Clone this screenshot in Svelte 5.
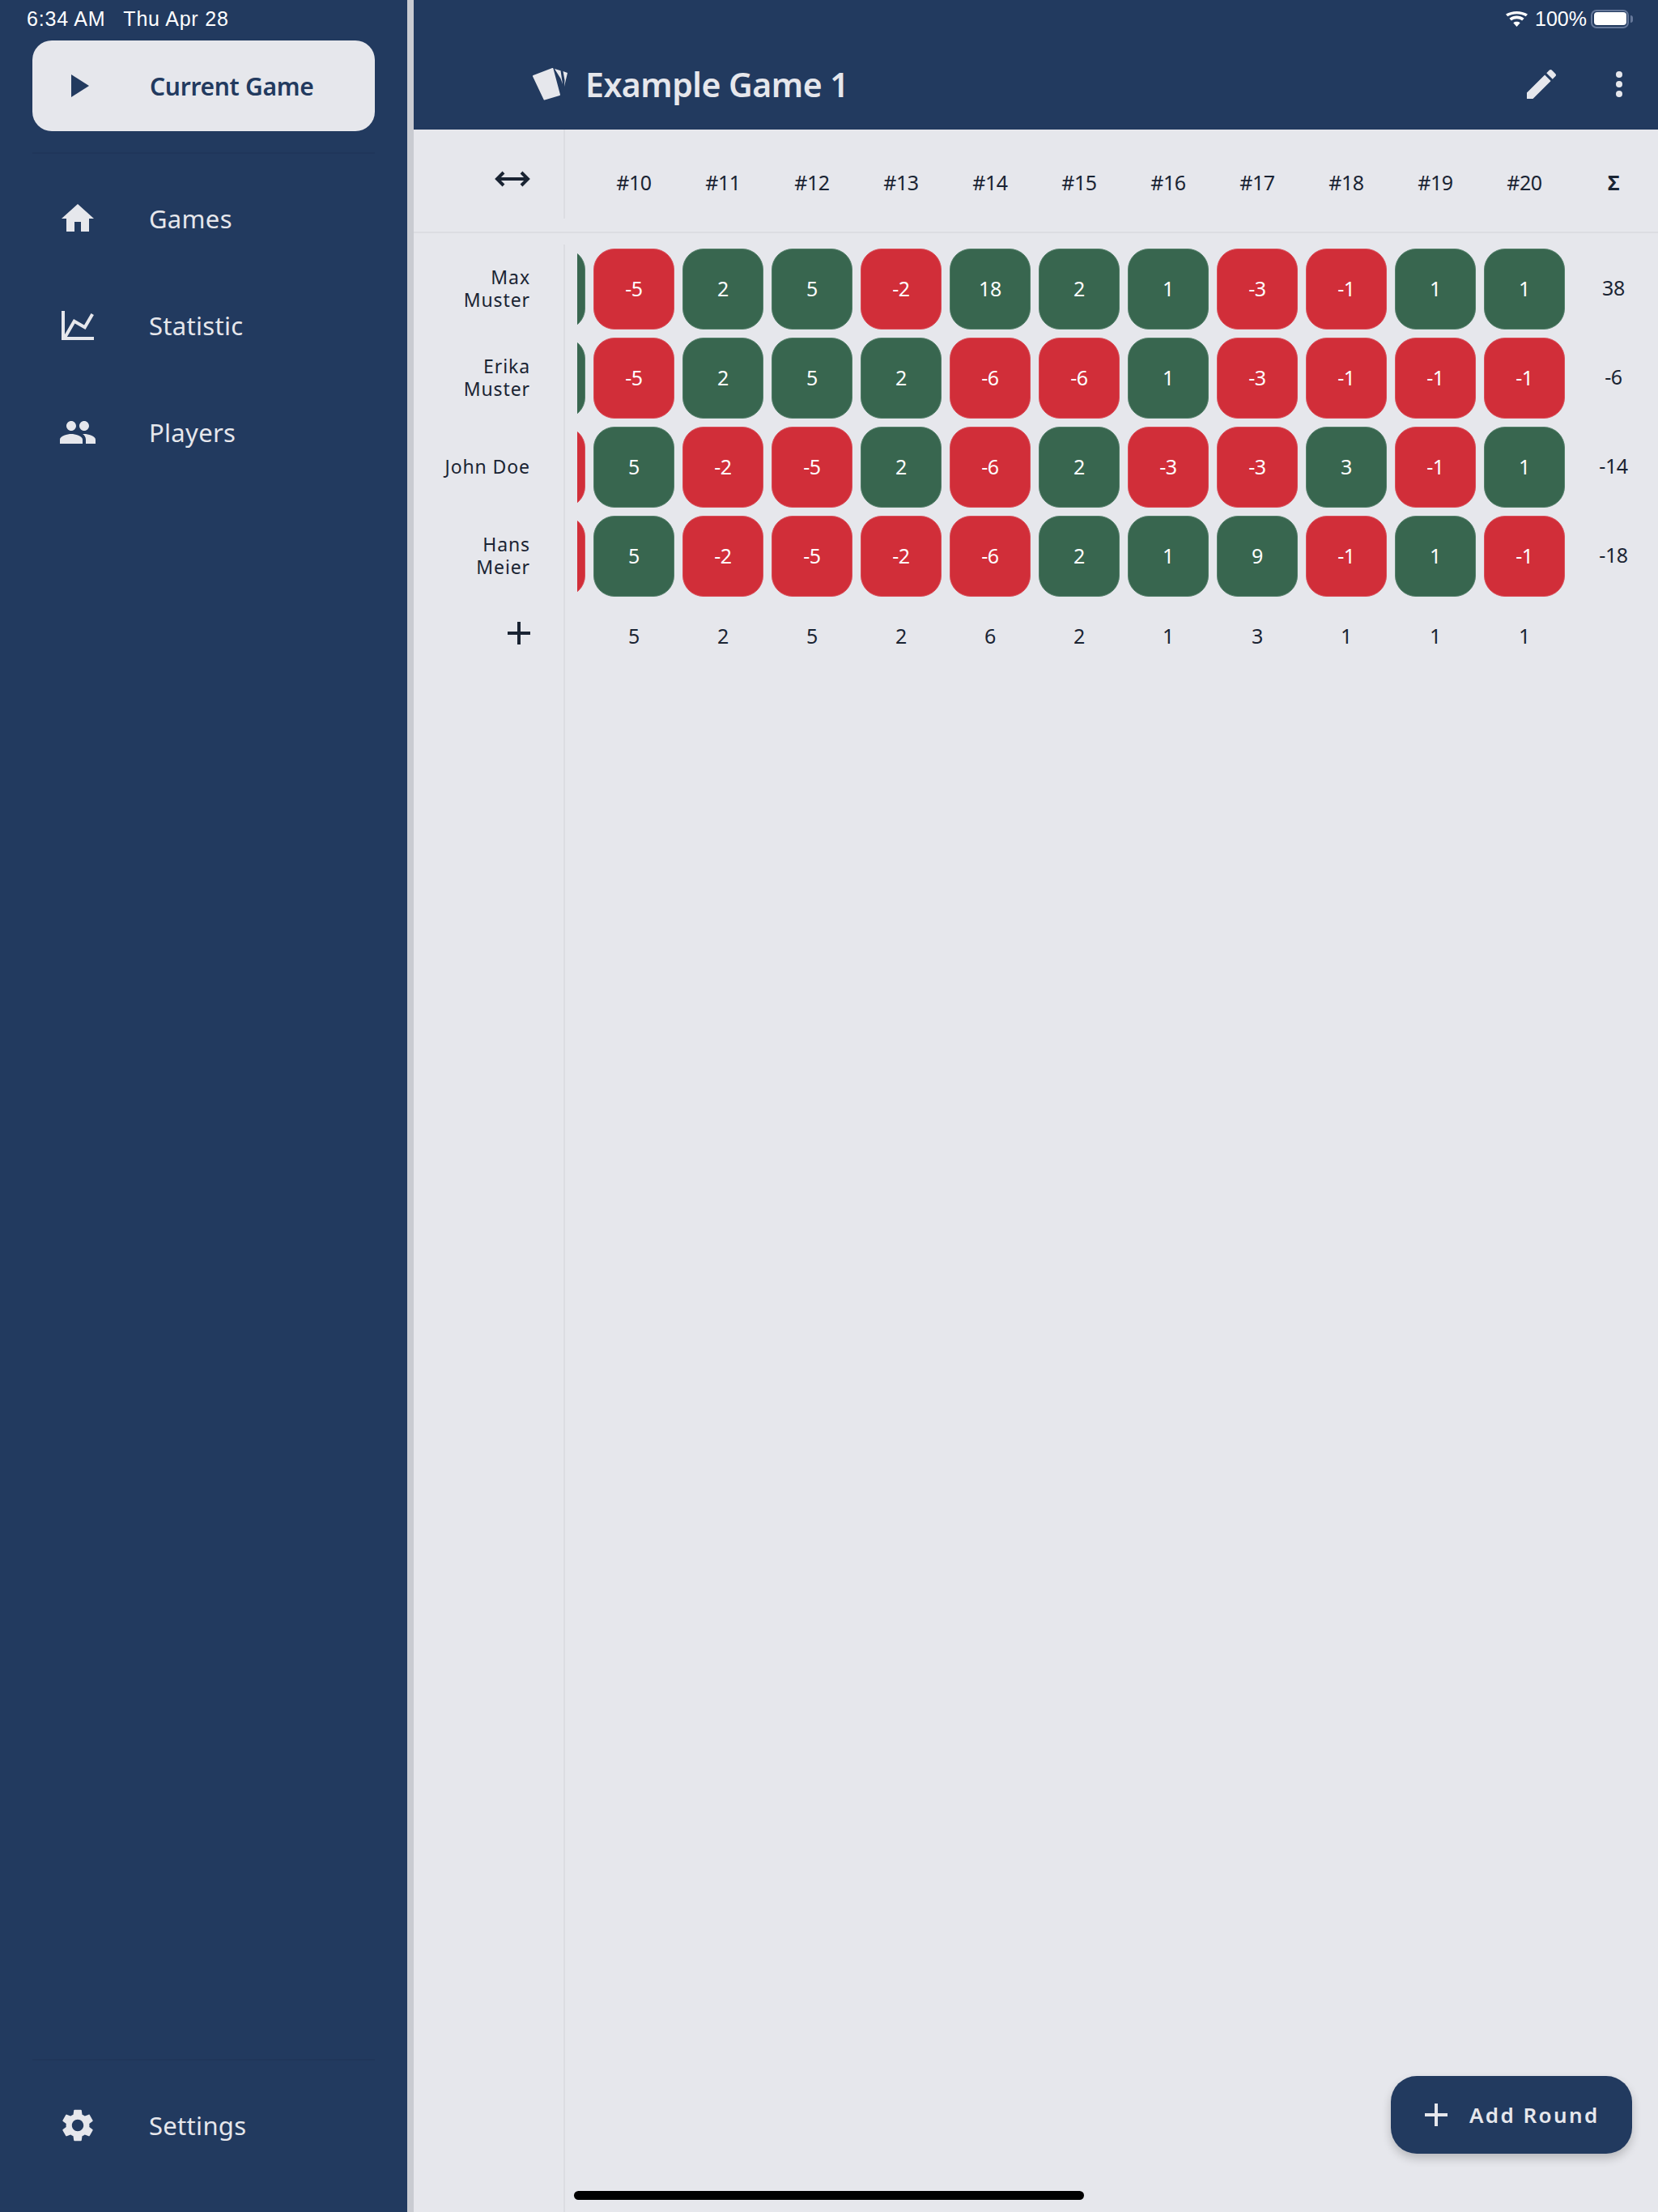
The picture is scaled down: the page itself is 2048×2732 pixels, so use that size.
<script>
	// first is the colour of the round cut off at the left edge of the scroller
	const players = [
		{ name: ['Max', 'Muster'], first: 5, scores: [-5, 2, 5, -2, 18, 2, 1, -3, -1, 1, 1], total: 38 },
		{ name: ['Erika', 'Muster'], first: 5, scores: [-5, 2, 5, 2, -6, -6, 1, -3, -1, -1, -1], total: -6 },
		{ name: ['John Doe'], first: -5, scores: [5, -2, -5, 2, -6, 2, -3, -3, 3, -1, 1], total: -14 },
		{ name: ['Hans', 'Meier'], first: -5, scores: [5, -2, -5, -2, -6, 2, 1, 9, -1, 1, -1], total: -18 }
	];
	const rounds = [10, 11, 12, 13, 14, 15, 16, 17, 18, 19, 20];
	const roundValues = [5, 2, 5, 2, 6, 2, 1, 3, 1, 1, 1];

	const nav = [
		{
			label: 'Games',
			icon: 'M10 20v-6h4v6h5v-8h3L12 3 2 12h3v8z'
		},
		{
			label: 'Statistic',
			icon: 'M16 11.78 20.24 4.45 21.97 5.45 16.74 14.5 10.23 10.75 5.46 19H22V21H2V3H4V17.54L9.5 8 16 11.78Z'
		},
		{
			label: 'Players',
			icon: 'M16 11c1.66 0 2.99-1.34 2.99-3S17.66 5 16 5c-1.66 0-3 1.34-3 3s1.34 3 3 3zm-8 0c1.66 0 2.99-1.34 2.99-3S9.66 5 8 5C6.34 5 5 6.34 5 8s1.34 3 3 3zm0 2c-2.33 0-7 1.17-7 3.5V19h14v-2.5c0-2.33-4.67-3.5-7-3.5zm8 0c-.29 0-.62.02-.97.05 1.16.84 1.97 1.97 1.97 3.45V19h6v-2.5c0-2.33-4.67-3.5-7-3.5z'
		}
	];
	const gear =
		'M19.14 12.94c.04-.3.06-.61.06-.94 0-.32-.02-.64-.07-.94l2.03-1.58c.18-.14.23-.41.12-.61l-1.92-3.32c-.12-.22-.37-.29-.59-.22l-2.39.96c-.5-.38-1.03-.7-1.62-.94l-.36-2.54c-.04-.24-.24-.41-.48-.41h-3.84c-.24 0-.43.17-.47.41l-.36 2.54c-.59.24-1.13.57-1.62.94l-2.39-.96c-.22-.08-.47 0-.59.22L2.74 8.87c-.12.21-.08.47.12.61l2.03 1.58c-.05.3-.09.63-.09.94s.02.64.07.94l-2.03 1.58c-.18.14-.23.41-.12.61l1.92 3.32c.12.22.37.29.59.22l2.39-.96c.5.38 1.03.7 1.62.94l.36 2.54c.05.24.24.41.48.41h3.84c.24 0 .44-.17.47-.41l.36-2.54c.59-.24 1.13-.56 1.62-.94l2.39.96c.22.08.47 0 .59-.22l1.92-3.32c.12-.22.07-.47-.12-.61l-2.01-1.58zM12 15.6c-1.98 0-3.6-1.62-3.6-3.6s1.62-3.6 3.6-3.6 3.6 1.62 3.6 3.6-1.62 3.6-3.6 3.6z';
</script>

<div class="app">
	<aside class="drawer">
		<div class="current">
			<svg class="play" viewBox="0 0 22 28"><path d="M0 0 22 14 0 28z" /></svg>
			<span>Current Game</span>
		</div>
		<hr />
		<nav>
			{#each nav as item}
				<div class="nav-item">
					<svg class="nav-icon" viewBox="0 0 24 24"><path d={item.icon} /></svg>
					<span>{item.label}</span>
				</div>
			{/each}
		</nav>
		<div class="drawer-foot">
			<hr />
			<div class="nav-item settings">
				<svg class="nav-icon" viewBox="0 0 24 24"><path d={gear} /></svg>
				<span>Settings</span>
			</div>
		</div>
	</aside>

	<div class="scrim"></div>

	<main>
		<header class="appbar">
			<div class="title">
				<svg class="cards" viewBox="0 0 43 40">
					<path class="card" d="M1 10 24.5 1 33 33 14.5 38.5z" />
					<path d="M27 1 34.5 3.2 37 20 34.5 13zM37.5 4 43 6 39 23 39.5 15z" />
				</svg>
				<h1>Example Game 1</h1>
			</div>
			<svg class="edit" viewBox="0 0 24 24">
				<path d="M3 17.25V21h3.75L17.81 9.94l-3.75-3.75L3 17.25zM20.71 7.04c.39-.39.39-1.02 0-1.41l-2.34-2.34c-.39-.39-1.02-.39-1.41 0l-1.83 1.83 3.75 3.75 1.83-1.83z" />
			</svg>
			<svg class="more" viewBox="0 0 10 34">
				<circle cx="5" cy="5" r="4" /><circle cx="5" cy="17" r="4" /><circle cx="5" cy="29" r="4" />
			</svg>
		</header>

		<div class="head">
			<div class="corner">
				<svg class="swap" viewBox="0 0 44 22">
					<path d="M3 11H41M11 3 3 11 11 19M33 3 41 11 33 19" />
				</svg>
			</div>
			<div class="scroller">
				<div class="track labels">
					{#each rounds as round}
						<div class="round">#{round}</div>
					{/each}
				</div>
			</div>
			<div class="sum sum-head">Σ</div>
		</div>

		<div class="board">
			<div class="names">
				{#each players as player}
					<div class="name">
						{#each player.name as part}
							<span>{part}</span>
						{/each}
					</div>
				{/each}
				<div class="add-player">
					<svg class="plus" viewBox="0 0 28 28"><path d="M14 0V28M0 14H28" /></svg>
				</div>
			</div>

			<div class="scroller">
				<div class="rows">
					{#each players as player}
						<div class="track">
							<div class="cell" class:minus={player.first < 0}></div>
							{#each player.scores as score}
								<div class="cell" class:minus={score < 0}><span>{score}</span></div>
							{/each}
						</div>
					{/each}
					<div class="track labels foot">
						{#each roundValues as value}
							<div class="round">{value}</div>
						{/each}
					</div>
				</div>
			</div>

			<div class="totals">
				{#each players as player}
					<div class="sum">{player.total}</div>
				{/each}
			</div>
		</div>
	</main>

	<!-- system overlays -->
	<div class="status">
		<span class="clock">6:34 AM</span>
		<span class="clock">Thu Apr 28</span>
		<span class="status-right">
			<svg class="wifi" viewBox="0 0 27 19">
				<path d="M13.5 19 9.3 14.2C11.8 12.3 15.2 12.3 17.7 14.2zM6.9 11.5 4.4 8.7C9.7 4.3 17.3 4.3 22.6 8.7L20.1 11.5C16.2 8.4 10.8 8.4 6.9 11.5zM2.2 6.2 0 3.6C7.8-1.2 19.2-1.2 27 3.6L24.8 6.2C18.1 2.2 8.9 2.2 2.2 6.2z" />
			</svg>
			<span class="pct">100%</span>
			<span class="battery"><i></i></span>
		</span>
	</div>

	<div class="fab">
		<svg class="plus" viewBox="0 0 28 28"><path d="M14 0V28M0 14H28" /></svg>
		<span>Add Round</span>
	</div>

	<div class="home-bar"></div>
</div>

<style>
	:global(body) {
		margin: 0;
		background: #e6e7ec;
	}

	.app {
		position: relative;
		display: flex;
		width: 2048px;
		height: 2732px;
		overflow: hidden;
		font-family: 'Noto Sans', sans-serif;
		color: #1a2433;
	}

	.drawer {
		width: 503px;
		flex-shrink: 0;
		box-sizing: border-box;
		padding: 50px 40px 0;
		display: flex;
		flex-direction: column;
		background: #223a5f;
		color: #e6e7ec;
	}

	.drawer hr {
		margin: 0;
		border: none;
		height: 2px;
		background: #20365a;
	}

	.current {
		display: flex;
		align-items: center;
		height: 112px;
		flex-shrink: 0;
		margin-bottom: 26px;
		padding-left: 48px;
		border-radius: 24px;
		background: #e6e7ec;
		color: #223a5f;
		font-size: 30px;
		font-weight: 600;
		letter-spacing: -0.3px;
	}

	.play {
		width: 22px;
		height: 28px;
		margin-right: 75px;
		fill: #223a5f;
	}

	nav {
		display: flex;
		flex-direction: column;
		padding-top: 14px;
	}

	.nav-item {
		display: flex;
		align-items: center;
		height: 132px;
		padding-left: 32px;
		font-size: 31px;
		letter-spacing: 0.3px;
	}

	.nav-icon {
		width: 48px;
		height: 48px;
		margin-right: 64px;
		fill: #e6e7ec;
	}

	.drawer-foot {
		margin-top: auto;
		padding-bottom: 33px;
	}

	.settings {
		height: 148px;
		margin-top: 6px;
	}

	.scrim {
		width: 8px;
		flex-shrink: 0;
		background: #c9cbd1;
	}

	main {
		flex: 1;
		display: flex;
		flex-direction: column;
		min-width: 0;
		background: #e6e7ec;
	}

	.appbar {
		display: flex;
		align-items: center;
		height: 160px;
		flex-shrink: 0;
		box-sizing: border-box;
		padding: 48px 43px 0 147px;
		background: #223a5f;
		color: #e6e7ec;
	}

	.title {
		display: flex;
		align-items: center;
		flex: 1;
	}

	.cards {
		width: 43px;
		height: 40px;
		margin-right: 22px;
		fill: #e6e7ec;
	}

	.card {
		stroke: #e6e7ec;
		stroke-width: 2;
		stroke-linejoin: round;
	}

	h1 {
		margin: 0;
		font-size: 41px;
		font-weight: 600;
		letter-spacing: -0.5px;
		line-height: 1;
	}

	.edit {
		width: 48px;
		height: 48px;
		margin-right: 67px;
		fill: #e6e7ec;
	}

	.more {
		width: 10px;
		height: 34px;
		fill: #e6e7ec;
	}

	.head {
		display: flex;
		flex-shrink: 0;
		height: 128px;
		box-sizing: border-box;
		border-bottom: 2px solid #dcdde2;
	}

	.corner {
		display: flex;
		align-items: center;
		justify-content: flex-end;
		width: 185px;
		height: 110px;
		border-right: 2px solid #dcdde2;
		margin-right: 15px;
	}

	.swap {
		width: 44px;
		height: 22px;
		margin-right: 41px;
		margin-top: 12px;
		fill: none;
		stroke: #1a2433;
		stroke-width: 4;
	}

	.scroller {
		width: 1230px;
		flex-shrink: 0;
		overflow: hidden;
	}

	.track {
		display: flex;
		gap: 10px;
		margin-left: -90px;
	}

	/* text rows start at the first whole round */
	.labels {
		margin-left: 20px;
	}

	.round {
		width: 100px;
		flex-shrink: 0;
		text-align: center;
		font-size: 25px;
		letter-spacing: -0.4px;
	}

	.head .round {
		line-height: 130px;
	}

	.sum-head {
		width: 100px;
		font-size: 28px;
		font-weight: 700;
		line-height: 130px;
	}

	.board {
		flex: 1;
		display: flex;
		padding-top: 14px;
	}

	.names {
		width: 185px;
		flex-shrink: 0;
		display: flex;
		flex-direction: column;
		gap: 10px;
		padding-top: 5px;
		border-right: 2px solid #dcdde2;
		margin-right: 15px;
	}

	.name {
		display: flex;
		flex-direction: column;
		justify-content: center;
		align-items: flex-end;
		height: 100px;
		padding-right: 41px;
		padding-bottom: 2px;
		box-sizing: border-box;
		font-size: 23px;
		line-height: 28px;
		letter-spacing: 0.9px;
	}

	.add-player {
		display: flex;
		justify-content: flex-end;
		padding: 21px 41px 0 0;
	}

	.plus {
		width: 28px;
		height: 28px;
		fill: none;
		stroke: #1a2433;
		stroke-width: 4;
	}

	.rows {
		display: flex;
		flex-direction: column;
		gap: 10px;
		padding-top: 5px;
	}

	.cell {
		width: 100px;
		height: 100px;
		flex-shrink: 0;
		box-sizing: border-box;
		display: flex;
		align-items: center;
		justify-content: center;
		padding-bottom: 2px;
		border: 1px solid #55806b;
		border-radius: 26px;
		background: #38664f;
		color: #fff;
		font-size: 25px;
		letter-spacing: -0.4px;
	}

	.cell.minus {
		border-color: #d9505a;
		background: #d12e39;
	}

	.foot {
		padding-top: 20px;
	}

	.foot .round {
		line-height: 36px;
	}

	.totals {
		width: 100px;
		flex-shrink: 0;
		display: flex;
		flex-direction: column;
		gap: 10px;
		padding-top: 3px;
	}

	.sum {
		text-align: center;
		font-size: 25px;
		letter-spacing: -0.4px;
	}

	.totals .sum {
		line-height: 100px;
	}

	.status {
		position: absolute;
		top: 0;
		left: 33px;
		right: 36px;
		display: flex;
		align-items: center;
		gap: 22px;
		height: 46px;
		font-family: 'Liberation Sans', sans-serif;
		font-size: 25px;
		letter-spacing: 0.8px;
		color: #fff;
	}

	.status-right {
		display: flex;
		align-items: center;
		margin-left: auto;
	}

	.wifi {
		width: 27px;
		height: 19px;
		fill: #fff;
		margin-right: 9px;
	}

	.pct {
		margin-right: 5px;
		letter-spacing: 0;
	}

	.battery {
		position: relative;
		display: block;
		width: 47px;
		height: 23px;
		box-sizing: border-box;
		padding: 1.5px;
		border: 2px solid #66789a;
		border-radius: 7px;
	}

	.battery i {
		display: block;
		height: 100%;
		border-radius: 4px;
		background: #fff;
	}

	.battery::after {
		content: '';
		position: absolute;
		top: 5px;
		right: -7px;
		width: 3px;
		height: 9px;
		border-radius: 0 3px 3px 0;
		background: #66789a;
	}

	.fab {
		position: absolute;
		left: 1718px;
		top: 2564px;
		display: flex;
		align-items: center;
		gap: 27px;
		width: 298px;
		height: 96px;
		box-sizing: border-box;
		padding-left: 42px;
		border-radius: 32px;
		background: #223a5f;
		color: #e6e7ec;
		font-size: 26px;
		font-weight: 600;
		letter-spacing: 2.4px;
		box-shadow: 0 6px 12px rgba(0, 0, 0, 0.2);
	}

	.fab .plus {
		stroke: #e6e7ec;
	}

	.home-bar {
		position: absolute;
		left: 709px;
		top: 2706px;
		width: 630px;
		height: 11px;
		border-radius: 6px;
		background: #000;
	}
</style>
